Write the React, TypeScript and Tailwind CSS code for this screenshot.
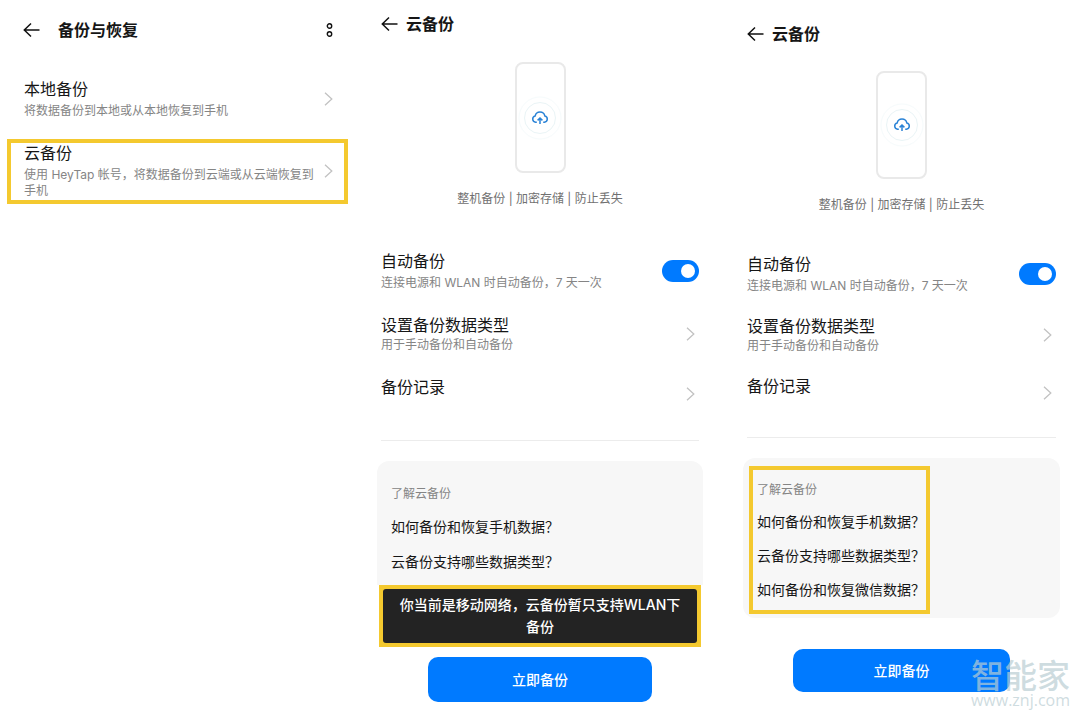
import { useState } from "react";
import clsx from "clsx";

function BackIcon() {
  return (
    <svg width="17" height="16" viewBox="0 0 17 16" fill="none" stroke="#111" strokeWidth="1.5">
      <path d="M16.5 8H1.5M8 1.5 1.3 8 8 14.5" />
    </svg>
  );
}

function ChevronIcon() {
  return (
    <svg
      className="shrink-0"
      width="9"
      height="14"
      viewBox="0 0 9 14"
      fill="none"
      stroke="#c2c2c2"
      strokeWidth="1.3"
    >
      <path d="M1 .7 7.8 7 1 13.3" />
    </svg>
  );
}

function PhoneArt({ className }: { className: string }) {
  return (
    <div
      className={clsx(
        "mx-auto flex w-[51px] items-center justify-center rounded-lg border-2 border-[#e9e9e9] bg-white",
        className
      )}
    >
      <svg width="46" height="46" viewBox="0 0 46 46" fill="none">
        <circle cx="23" cy="23" r="21" stroke="#f6fbfc" />
        <circle cx="23" cy="23" r="15.5" stroke="#eaf4f6" />
        <g stroke="#2b83d6" strokeWidth="1.5">
          <path d="M19.8 27.2h-1.2a3.2 3.2 0 0 1-.4-6.3 4.9 4.9 0 0 1 9.6 0 3.2 3.2 0 0 1-.4 6.3h-1.2" />
          <path d="M23 29v-5.8M20.6 25.4l2.4-2.4 2.4 2.4" />
        </g>
      </svg>
    </div>
  );
}

function Header({ title, className }: { title: string; className: string }) {
  return (
    <header className={clsx("flex h-5 items-center", className)}>
      <button type="button" aria-label="返回">
        <BackIcon />
      </button>
      <h1 className="text-base leading-5 font-bold">{title}</h1>
    </header>
  );
}

function AutoBackupRow({ id }: { id: string }) {
  const [on, setOn] = useState(true);

  return (
    <div className="flex items-center justify-between">
      <label htmlFor={id}>
        <span className="block text-base leading-5">自动备份</span>
        <span className="mt-1 block text-xs leading-4 text-[#858585]">
          连接电源和 WLAN 时自动备份，7 天一次
        </span>
      </label>
      <input
        id={id}
        type="checkbox"
        role="switch"
        checked={on}
        onChange={(e) => setOn(e.target.checked)}
        className="flex h-[22px] w-[37px] shrink-0 appearance-none items-center rounded-full bg-gray-300 px-1 before:size-[14px] before:rounded-full before:bg-white checked:justify-end checked:bg-[#007aff]"
      />
    </div>
  );
}

type CloudProps = {
  id: string;
  className: string;
  headerClass: string;
  phoneClass: string;
  listClass: string;
  dividerClass: string;
  children: React.ReactNode;
};

function CloudBackup({
  id,
  className,
  headerClass,
  phoneClass,
  listClass,
  dividerClass,
  children,
}: CloudProps) {
  return (
    <section className={className}>
      <div className="px-1">
        <Header title="云备份" className={clsx("gap-2", headerClass)} />
        <PhoneArt className={phoneClass} />
        <p className="mt-[18px] text-center text-xs leading-4 text-[#707070]">
          整机备份 | 加密存储 | 防止丢失
        </p>

        <div className={clsx("flex flex-col", listClass)}>
          <AutoBackupRow id={id} />
          <button type="button" className="flex items-center justify-between pr-1 text-left">
            <span>
              <span className="block text-base leading-5">设置备份数据类型</span>
              <span className="mt-0.5 block text-xs leading-4 text-[#858585]">
                用于手动备份和自动备份
              </span>
            </span>
            <ChevronIcon />
          </button>
          <button type="button" className="flex h-[34px] items-center justify-between pr-1 text-left">
            <span className="self-start text-base leading-5">备份记录</span>
            <ChevronIcon />
          </button>
        </div>

        <hr className={clsx("border-[#ececec]", dividerClass)} />
      </div>
      {children}
    </section>
  );
}

function Faq({ items, className }: { items: string[]; className: string }) {
  return (
    <div className={className}>
      <h2 className="text-xs leading-4 text-[#858585]">了解云备份</h2>
      {items.map((item) => (
        <a key={item} href="#" className="text-sm leading-5 whitespace-nowrap">
          {item}
        </a>
      ))}
    </div>
  );
}

export default function App() {
  return (
    <main className="relative grid min-h-screen grid-cols-[74fr_73fr_69fr] bg-white font-[Inter,'Noto_Sans_CJK_SC',sans-serif] text-[#161616]">
      {/* Backup & restore */}
      <section className="pr-[22px] pl-[7px]">
        <div className="flex items-center justify-between pt-5 pr-[15px] pl-4">
          <Header title="备份与恢复" className="gap-[18px]" />
          <button type="button" aria-label="更多">
            <svg width="7" height="14" viewBox="0 0 7 14" fill="none" stroke="#111" strokeWidth="1.4">
              <circle cx="3.5" cy="3" r="2.2" />
              <circle cx="3.5" cy="11" r="2.2" />
            </svg>
          </button>
        </div>

        <div className="mt-[35px] flex flex-col gap-4">
          <button
            type="button"
            className="flex items-center justify-between border-4 border-transparent pr-[11px] pl-[13px] text-left"
          >
            <span>
              <span className="block text-base leading-5">本地备份</span>
              <span className="mt-1 block text-xs leading-4 text-[#858585]">
                将数据备份到本地或从本地恢复到手机
              </span>
            </span>
            <ChevronIcon />
          </button>
          <button
            type="button"
            className="flex items-center justify-between gap-2 border-4 border-[#f4c92f] pr-[11px] pb-px pl-[13px] text-left"
          >
            <span>
              <span className="block text-base leading-5">云备份</span>
              <span className="mt-1 block text-xs leading-4 text-[#858585]">
                使用 HeyTap 帐号，将数据备份到云端或从云端恢复到手机
              </span>
            </span>
            <ChevronIcon />
          </button>
        </div>
      </section>

      {/* Cloud backup on mobile data */}
      <CloudBackup
        id="auto-backup-mobile"
        className="pr-8 pl-[7px]"
        headerClass="mt-[14px]"
        phoneClass="mt-7 h-[111px]"
        listClass="mt-11 gap-6"
        dividerClass="mt-[29px]"
      >
        <Faq
          items={["如何备份和恢复手机数据？", "云备份支持哪些数据类型？"]}
          className="mt-5 flex flex-col gap-[15px] rounded-t-xl bg-[#f7f7f7] px-[14px] pt-[25px] pb-[13px]"
        />
        <div className="mx-0.5 border-4 border-[#f4c92f] bg-[#f4c92f]">
          <p
            role="status"
            className="rounded-[3px] bg-[#232323] px-3 py-[5px] text-center text-sm leading-[22px] font-medium text-white"
          >
            你当前是移动网络，云备份暂只支持WLAN下备份
          </p>
        </div>
        <button
          type="button"
          className="mx-auto mt-[10px] block h-[45px] w-[224px] rounded-[10px] bg-[#007aff] text-sm font-medium text-white"
        >
          立即备份
        </button>
      </CloudBackup>

      {/* Cloud backup on WLAN */}
      <CloudBackup
        id="auto-backup-wlan"
        className="pr-5 pl-2"
        headerClass="mt-6"
        phoneClass="mt-[27px] h-[108px]"
        listClass="mt-[41px] gap-[22px]"
        dividerClass="mt-[27px]"
      >
        <div className="mt-5 rounded-xl bg-[#f7f7f7] px-1.5 pt-2 pb-1">
          <Faq
            items={["如何备份和恢复手机数据？", "云备份支持哪些数据类型？", "如何备份和恢复微信数据？"]}
            className="flex w-fit flex-col gap-[14px] border-4 border-[#f4c92f] pt-3 pr-px pb-[10px] pl-1"
          />
        </div>
        <button
          type="button"
          className="mx-auto mt-[31px] block h-[43px] w-[217px] rounded-[10px] bg-[#007aff] text-sm font-medium text-white"
        >
          立即备份
        </button>
      </CloudBackup>

      {/* Site watermark */}
      <div className="pointer-events-none absolute right-2.5 bottom-3 text-center text-[#b9cdd2]/70">
        <p className="text-[33px] leading-8 font-medium">智能家</p>
        <p className="font-['Open_Sans',sans-serif] text-base leading-4">www.znj.com</p>
      </div>
    </main>
  );
}
